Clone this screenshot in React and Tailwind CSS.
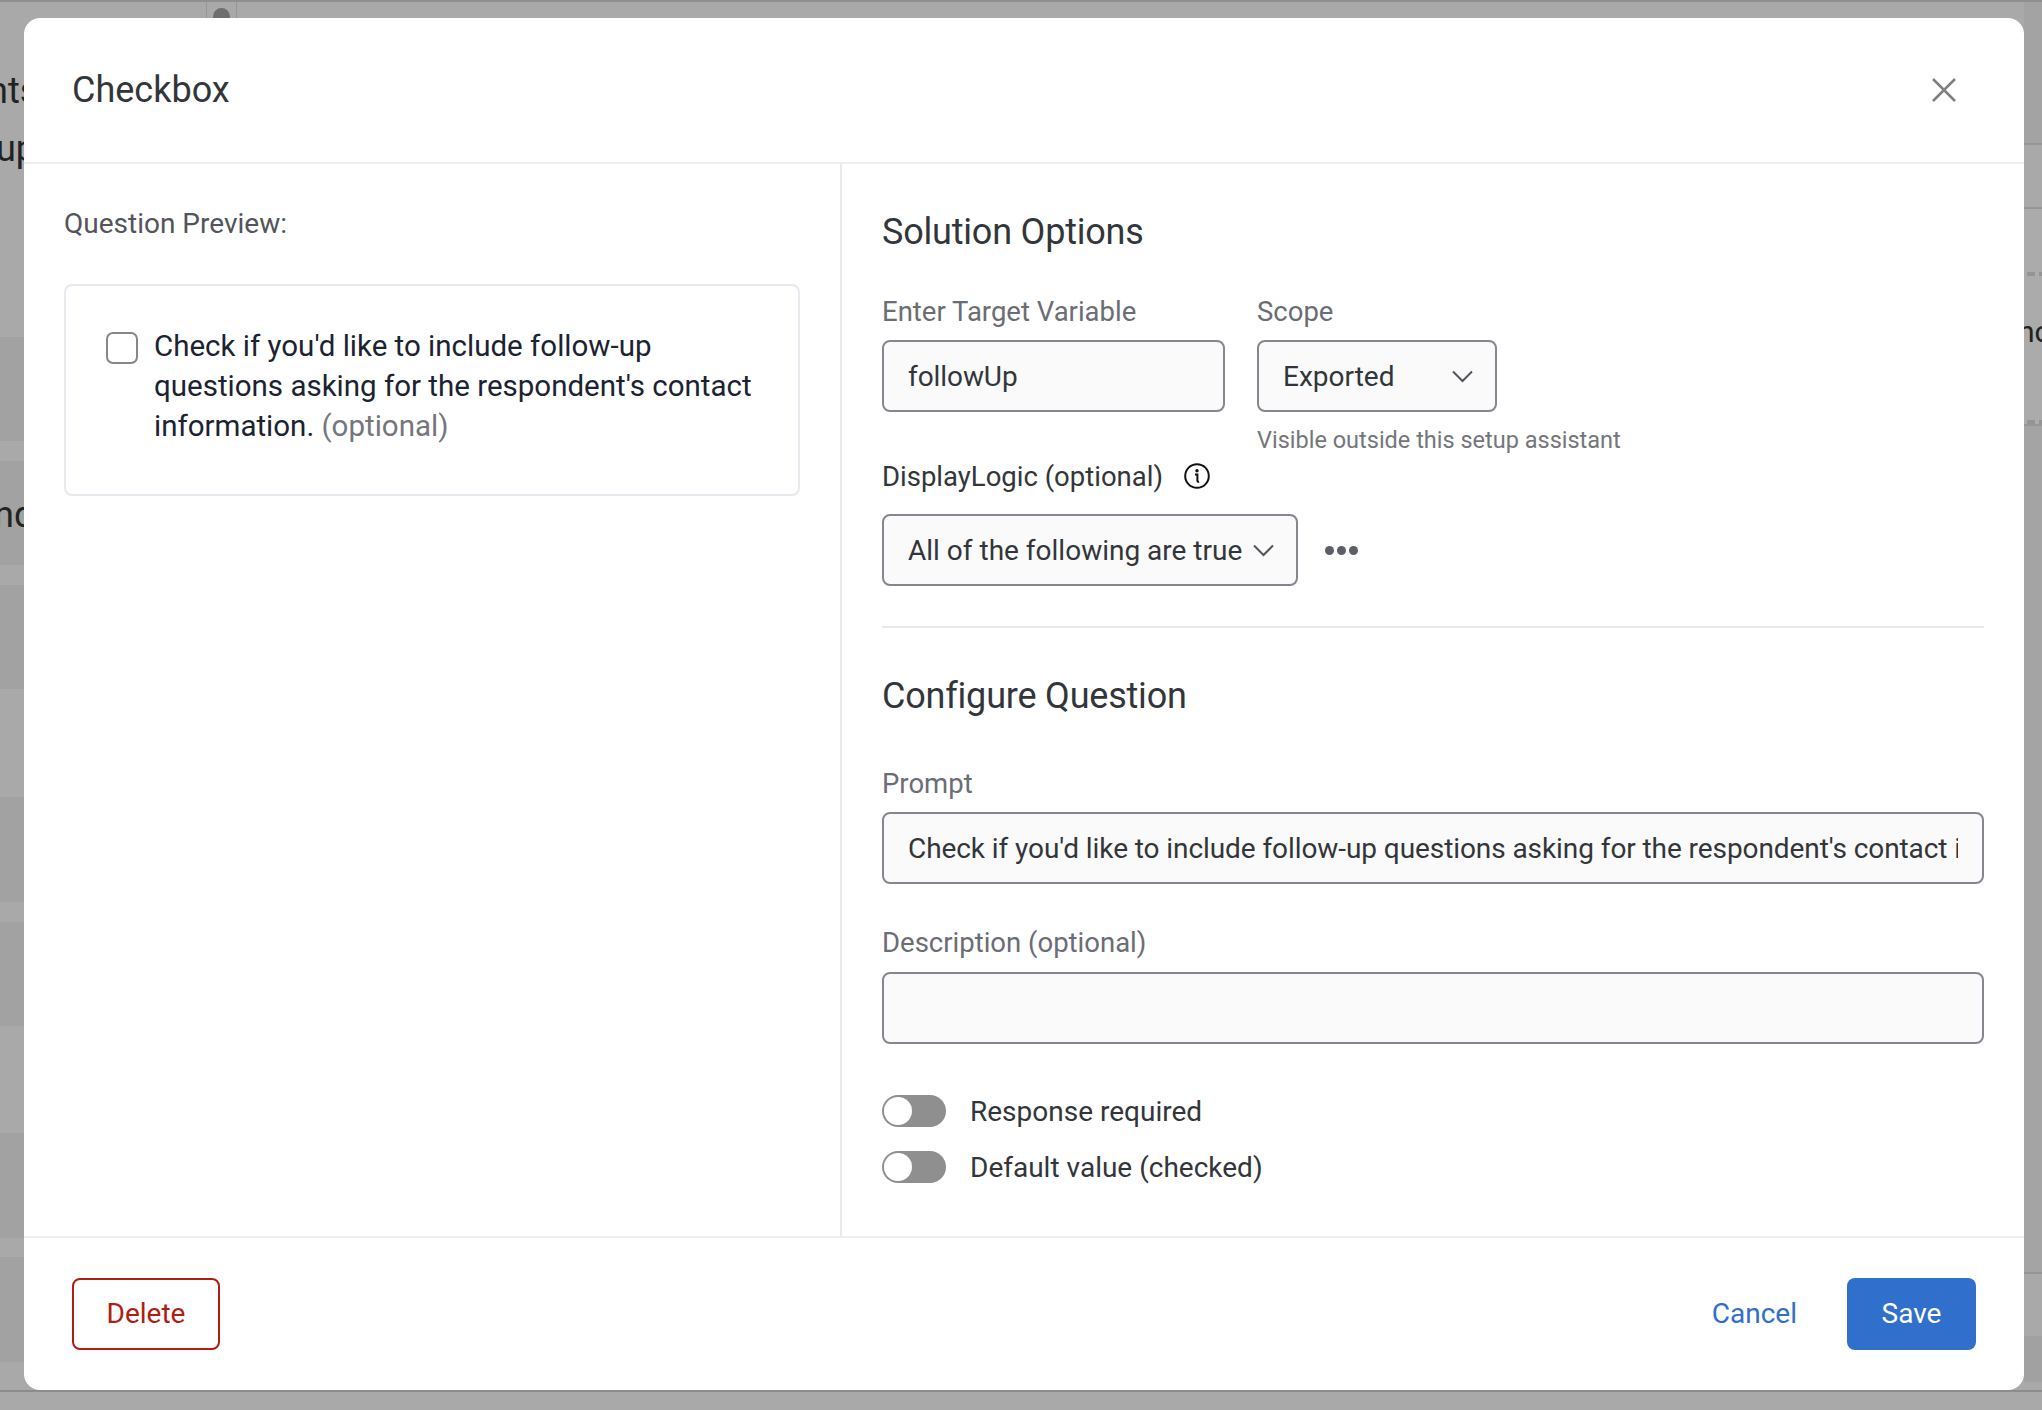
import React from "react";

const font = { fontFamily: 'Roboto, sans-serif' };

const leftBands = [
  ["h-[335px]", "bg-[#a9a9a9]"],
  ["h-[104px]", "bg-[#a2a2a2]"],
  ["h-[20px]", "bg-[#a9a9a9]"],
  ["h-[104px]", "bg-[#a2a2a2]"],
  ["h-[20px]", "bg-[#a9a9a9]"],
  ["h-[104px]", "bg-[#a2a2a2]"],
  ["h-[108px]", "bg-[#a9a9a9]"],
  ["h-[105px]", "bg-[#a2a2a2]"],
  ["h-[20px]", "bg-[#a9a9a9]"],
  ["h-[104px]", "bg-[#a2a2a2]"],
  ["h-[107px]", "bg-[#a9a9a9]"],
  ["h-[105px]", "bg-[#a2a2a2]"],
  ["h-[19px]", "bg-[#a9a9a9]"],
  ["h-[105px]", "bg-[#a2a2a2]"],
  ["h-[20px]", "bg-[#a9a9a9]"],
];

function Chevron() {
  return (
    <svg width="21" height="13" viewBox="0 0 21 13" fill="none" className="shrink-0">
      <path d="M1 1.5l9.5 9.5L20 1.5" stroke="#52555c" strokeWidth="2" />
    </svg>
  );
}

function Field({ label, className, children }) {
  return (
    <div className={className}>
      <div className="text-[27.5px] leading-[38px] text-[#6b6d75]">{label}</div>
      {children}
    </div>
  );
}

function TextBox({ value, className }) {
  return (
    <div
      className={`h-[72px] flex items-center px-[24px] border-2 border-[#85878e] rounded-lg bg-[#fafafa] text-[28px] text-[#32363a] tracking-[-0.08px] ${className}`}
    >
      <div className="w-full pt-[1px] whitespace-nowrap overflow-hidden">{value}</div>
    </div>
  );
}

function Toggle({ label }) {
  return (
    <div className="flex items-center h-[32px]">
      <div className="w-[64px] h-[32px] rounded-full bg-[#8f8f8f] p-[2px]">
        <div className="w-[28px] h-[28px] rounded-full bg-white" />
      </div>
      <span className="ml-[24px] pt-[1px] text-[28px] text-[#32363a]">{label}</span>
    </div>
  );
}

function Dashes({ className }) {
  return (
    <div className={`absolute left-[2027px] flex gap-[4px] ${className}`}>
      <div className="w-[8px] h-[4px] bg-[#949494]" />
      <div className="w-[8px] h-[4px] bg-[#949494]" />
    </div>
  );
}

export default function App() {
  return (
    <div className="relative w-[2042px] h-[1410px] overflow-hidden bg-[#a9a9a9]" style={font}>
      {/* dimmed page behind the dialog */}
      <div className="h-[2px] bg-[#8f8f8f]" />
      <div className="flex">
        <div className="w-[24px]">
          {leftBands.map(([h, bg], i) => (
            <div key={i} className={`${h} ${bg}`} />
          ))}
        </div>
        <div className="flex-1" />
        <div className="w-[18px] h-[1380px] flex flex-col">
          <div className="h-[141px] bg-[#a3a3a3]" />
          <div className="h-[64px] border-t-2 border-[#969696] bg-[#a9a9a9]" />
          <div className="h-[217px] border-t-2 border-[#969696] bg-[#ababab]" />
          <div className="h-[848px] border-t-2 border-[#969696] bg-[#a4a4a4]" />
          <div className="h-[64px] border-t-2 border-[#969696] bg-[#a9a9a9]" />
          <div className="flex-1 bg-[#a1a1a1]" />
        </div>
      </div>
      <div className="absolute left-0 top-[1390px] w-full h-[2px] bg-[#8c8c8c]" />

      {/* clipped words behind the dialog */}
      <span className="absolute left-[-12px] top-[64px] text-[36px] text-[#222]">nts</span>
      <span className="absolute left-[-4px] top-[122px] text-[36px] text-[#222]">up</span>
      <span className="absolute left-[-6px] top-[488px] text-[36px] text-[#222]">nd</span>
      <span className="absolute left-[2018px] top-[309px] text-[30px] text-[#222]">nc</span>
      <div className="absolute left-[206px] top-[2px] w-[31px] h-[16px] border-x border-[#969696]">
        <div className="mx-auto mt-[6px] w-[17px] h-[17px] rounded-full bg-[#6e6e6e]" />
      </div>
      <Dashes className="top-[272px]" />
      <Dashes className="top-[420px]" />

      {/* dialog */}
      <div className="absolute left-[24px] top-[18px] w-[2000px] h-[1372px] bg-white rounded-[16px] flex flex-col overflow-hidden">
        <div className="h-[146px] flex items-center justify-between pl-[48px] pr-[68px] border-b-2 border-[#eeeeee]">
          <h1 className="text-[36px] text-[#32363a]">Checkbox</h1>
          <svg width="24" height="24" viewBox="0 0 24 24" fill="none">
            <path d="M1 1l22 22M23 1L1 23" stroke="#808080" strokeWidth="2.5" />
          </svg>
        </div>

        <div className="flex-1 flex min-h-0">
          <div className="w-[818px] shrink-0 border-r-2 border-[#e8e8ee] pl-[40px] pt-[40px]">
            <div className="text-[28px] leading-[40px] text-[#52555c]">Question Preview:</div>
            <div className="mt-[40px] h-[212px] w-[736px] border-2 border-[#e8e8ee] rounded-lg pt-[40px] pl-[40px] pr-[30px] flex">
              <div className="w-[32px] h-[32px] mt-[6px] shrink-0 rounded-[7px] border-2 border-[#85878e]" />
              <p className="ml-[16px] text-[29.5px] leading-[40px] text-[#1b2330]">
                Check if you'd like to include follow-up questions asking for the respondent's contact
                information. <span className="text-[#74767c]">(optional)</span>
              </p>
            </div>
          </div>

          <div className="flex-1 min-w-0 pl-[40px] pr-[40px]">
            <h2 className="mt-[43px] text-[36px] leading-[50px] text-[#32363a] tracking-[-0.2px]">Solution Options</h2>

            <div className="mt-[36px] flex gap-[32px]">
              <Field label="Enter Target Variable" className="w-[343px]">
                <TextBox value="followUp" className="mt-[9px]" />
              </Field>
              <Field label="Scope" className="w-[240px]">
                <div className="mt-[9px] h-[72px] flex items-center justify-between pl-[24px] pr-[22px] border-2 border-[#85878e] rounded-lg bg-[#fafafa] text-[28px] text-[#32363a]">
                  <span className="pt-[1px]">Exported</span>
                  <Chevron />
                </div>
                <div className="mt-[10px] text-[23.5px] leading-[36px] text-[#74767c] whitespace-nowrap">
                  Visible outside this setup assistant
                </div>
              </Field>
            </div>

            <div className="mt-0 flex items-center h-[36px]">
              <span className="pt-[1px] text-[27.5px] text-[#32363a]">DisplayLogic (optional)</span>
              <svg width="26" height="26" viewBox="0 0 26 26" className="ml-[21px]" fill="none">
                <circle cx="13" cy="13" r="11.8" stroke="#111" strokeWidth="2" />
                <circle cx="13" cy="7.8" r="1.7" fill="#111" />
                <path d="M11 11.5h2.4v6.2c0 .8.6 1.2 1.7 1" stroke="#111" strokeWidth="2" />
              </svg>
            </div>

            <div className="mt-[20px] flex items-center">
              <div className="w-[416px] h-[72px] flex items-center justify-between pl-[24px] pr-[22px] border-2 border-[#85878e] rounded-lg bg-[#fafafa] text-[28px] text-[#32363a] whitespace-nowrap">
                <span className="pt-[1px]">All of the following are true</span>
                <Chevron />
              </div>
              <div className="ml-[27px] flex gap-[3px]">
                <div className="w-[9px] h-[9px] rounded-full bg-[#5b5e65]" />
                <div className="w-[9px] h-[9px] rounded-full bg-[#5b5e65]" />
                <div className="w-[9px] h-[9px] rounded-full bg-[#5b5e65]" />
              </div>
            </div>

            <div className="mt-[40px] border-t-2 border-[#e8e8ee]" />

            <h2 className="mt-[43px] text-[36px] leading-[50px] text-[#32363a] tracking-[-0.2px]">Configure Question</h2>

            <Field label="Prompt" className="mt-[44px]">
              <TextBox
                value="Check if you'd like to include follow-up questions asking for the respondent's contact information. (optional)"
                className="mt-[9px]"
              />
            </Field>
            <Field label="Description (optional)" className="mt-[40px]">
              <TextBox value="" className="mt-[10px]" />
            </Field>

            <div className="mt-[51px] flex flex-col gap-[24px]">
              <Toggle label="Response required" />
              <Toggle label="Default value (checked)" />
            </div>
          </div>
        </div>

        <div className="h-[154px] border-t-2 border-[#eeeeee] flex items-center justify-between pl-[48px] pr-[48px]">
          <button className="w-[148px] h-[72px] rounded-lg border-2 border-[#b01d12] text-[28px] text-[#b01d12]">
            Delete
          </button>
          <div className="flex items-center">
            <span className="text-[28px] text-[#306fcc]">Cancel</span>
            <button className="ml-[50px] w-[129px] h-[72px] rounded-lg bg-[#306fcc] text-[28px] text-white">
              Save
            </button>
          </div>
        </div>
      </div>
    </div>
  );
}
